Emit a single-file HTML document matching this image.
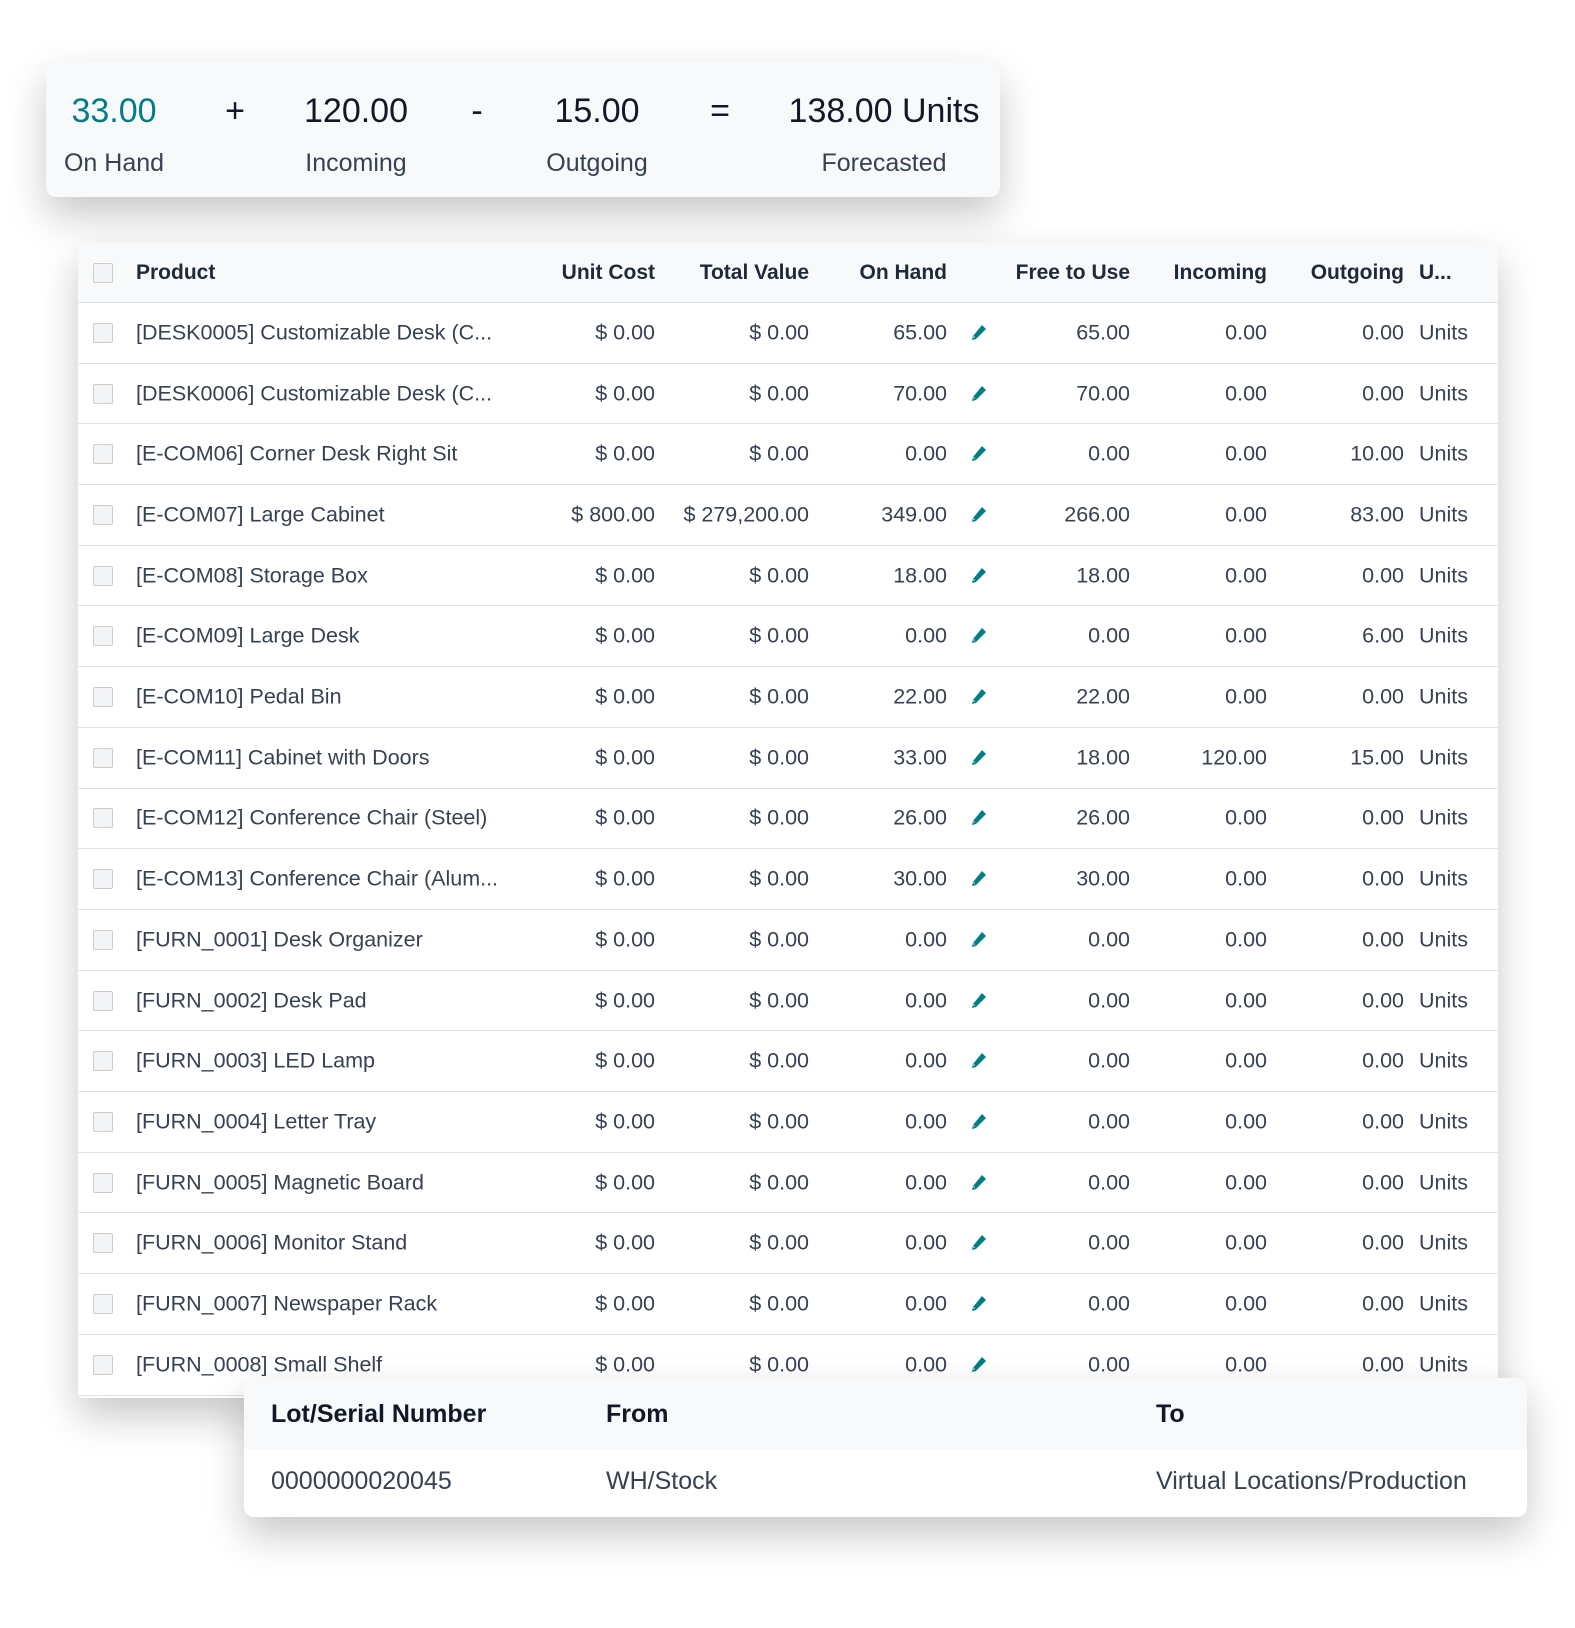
<!DOCTYPE html>
<html><head><meta charset="utf-8"><style>
*{margin:0;padding:0;box-sizing:border-box}
body{width:1575px;height:1628px;background:#fff;position:relative;overflow:hidden;font-family:"Liberation Sans",sans-serif;color:#374151}
.card{position:absolute;border-radius:10px;box-shadow:0 18px 40px rgba(0,0,0,.22)}
.top{left:46px;top:61px;width:954px;height:136px;background:#f8f9fa}
.t{position:absolute;transform:translateX(-50%);white-space:nowrap}
.num{top:31px;font-size:34px;color:#111827}
.lab{top:88px;font-size:25px;color:#374151}
.tbl{left:78px;top:243px;width:1420px;height:1155px;background:#fff;border-radius:4px;overflow:hidden}
.row{position:absolute;left:0;width:1420px;height:60.7px;border-bottom:1px solid #dee2e6;font-size:21.5px}
.row span{position:absolute;top:50%;transform:translateY(-50%);white-space:nowrap}
.cb{position:absolute;left:15px;top:50%;margin-top:-10px;width:20px;height:20px;border:1px solid #ccc;background:#f3f4f6;border-radius:2px}
.hdr{background:#f8f9fa;color:#1f2937;font-weight:bold;font-size:21px}
.bot{left:244px;top:1378px;width:1283px;height:139px;background:#fff;overflow:hidden}
.bot .h{position:absolute;left:0;top:0;width:100%;height:71px;background:#f8f9fa}
.bot span{position:absolute;font-size:25px;white-space:nowrap}
</style></head><body>
<div class="card top">
<div class="t num" style="left:68px;color:#017e84">33.00</div>
<div class="t num" style="left:189px">+</div>
<div class="t num" style="left:310px">120.00</div>
<div class="t num" style="left:431px">-</div>
<div class="t num" style="left:551px">15.00</div>
<div class="t num" style="left:674px">=</div>
<div class="t num" style="left:838px">138.00 Units</div>
<div class="t lab" style="left:68px">On Hand</div>
<div class="t lab" style="left:310px">Incoming</div>
<div class="t lab" style="left:551px">Outgoing</div>
<div class="t lab" style="left:838px">Forecasted</div>
</div>
<div class="card tbl" id="tbl">
<div class="row hdr" style="top:0;height:60px">
<div class="cb"></div>
<span style="left:58px">Product</span>
<span style="right:843px">Unit Cost</span>
<span style="right:689px">Total Value</span>
<span style="right:551px">On Hand</span>
<span style="right:368px">Free to Use</span>
<span style="right:231px">Incoming</span>
<span style="right:94px">Outgoing</span>
<span style="left:1341px">U...</span>
</div>
</div>
<div class="card bot">
<div class="h"></div>
<span style="left:27px;top:22px;color:#111827;font-weight:bold">Lot/Serial Number</span>
<span style="left:362px;top:22px;color:#111827;font-weight:bold">From</span>
<span style="left:912px;top:22px;color:#111827;font-weight:bold">To</span>
<span style="left:27px;top:89px">0000000020045</span>
<span style="left:362px;top:89px">WH/Stock</span>
<span style="left:912px;top:89px">Virtual Locations/Production</span>
</div>
<script>
var d=[["[DESK0005] Customizable Desk (C...","$ 0.00","$ 0.00","65.00","65.00","0.00","0.00"],
["[DESK0006] Customizable Desk (C...","$ 0.00","$ 0.00","70.00","70.00","0.00","0.00"],
["[E-COM06] Corner Desk Right Sit","$ 0.00","$ 0.00","0.00","0.00","0.00","10.00"],
["[E-COM07] Large Cabinet","$ 800.00","$ 279,200.00","349.00","266.00","0.00","83.00"],
["[E-COM08] Storage Box","$ 0.00","$ 0.00","18.00","18.00","0.00","0.00"],
["[E-COM09] Large Desk","$ 0.00","$ 0.00","0.00","0.00","0.00","6.00"],
["[E-COM10] Pedal Bin","$ 0.00","$ 0.00","22.00","22.00","0.00","0.00"],
["[E-COM11] Cabinet with Doors","$ 0.00","$ 0.00","33.00","18.00","120.00","15.00"],
["[E-COM12] Conference Chair (Steel)","$ 0.00","$ 0.00","26.00","26.00","0.00","0.00"],
["[E-COM13] Conference Chair (Alum...","$ 0.00","$ 0.00","30.00","30.00","0.00","0.00"],
["[FURN_0001] Desk Organizer","$ 0.00","$ 0.00","0.00","0.00","0.00","0.00"],
["[FURN_0002] Desk Pad","$ 0.00","$ 0.00","0.00","0.00","0.00","0.00"],
["[FURN_0003] LED Lamp","$ 0.00","$ 0.00","0.00","0.00","0.00","0.00"],
["[FURN_0004] Letter Tray","$ 0.00","$ 0.00","0.00","0.00","0.00","0.00"],
["[FURN_0005] Magnetic Board","$ 0.00","$ 0.00","0.00","0.00","0.00","0.00"],
["[FURN_0006] Monitor Stand","$ 0.00","$ 0.00","0.00","0.00","0.00","0.00"],
["[FURN_0007] Newspaper Rack","$ 0.00","$ 0.00","0.00","0.00","0.00","0.00"],
["[FURN_0008] Small Shelf","$ 0.00","$ 0.00","0.00","0.00","0.00","0.00"]];
var pen='<svg width="20" height="20" viewBox="0 0 20 20" style="display:block"><path d="M14 2l4 4-10 10-4 1 1-4z" fill="#017e84"/><path d="M5.5 13.5l1 1" stroke="#fff" stroke-width="1.2"/></svg>';
var h='';
d.forEach(function(r,i){var t=60+i*60.7;
h+='<div class="row" style="top:'+t+'px"><div class="cb"></div><span style="left:58px">'+r[0]+'</span>'+
'<span style="right:843px">'+r[1]+'</span><span style="right:689px">'+r[2]+'</span><span style="right:551px">'+r[3]+'</span>'+
'<span style="left:890px;height:20px">'+pen+'</span>'+
'<span style="right:368px">'+r[4]+'</span><span style="right:231px">'+r[5]+'</span><span style="right:94px">'+r[6]+'</span><span style="left:1341px">Units</span></div>';});
document.getElementById('tbl').insertAdjacentHTML('beforeend',h);
</script>
</body></html>
